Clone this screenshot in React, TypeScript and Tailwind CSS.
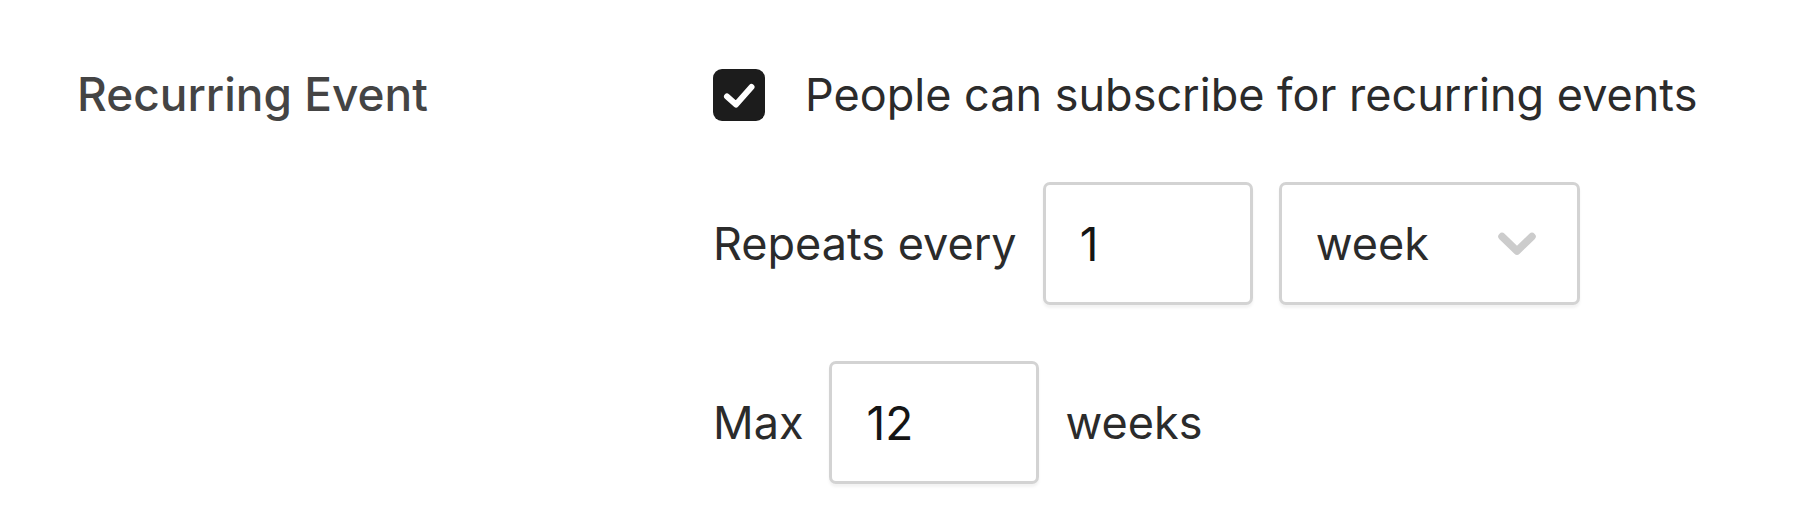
import { useState } from 'react';

function CheckBox({ checked, onToggle }: { checked: boolean; onToggle: () => void }) {
  return (
    <button
      type="button"
      onClick={onToggle}
      className={`w-[52px] h-[52px] rounded-[9px] flex items-center justify-center shrink-0 ${
        checked ? 'bg-[#1c1c1c]' : 'bg-white border-[3px] border-[#d3d3d3]'
      }`}
    >
      {checked && (
        <svg width="52" height="52" viewBox="0 0 52 52" fill="none">
          <path d="M14 27.5L23 35.5L38.5 18" stroke="white" strokeWidth="6" strokeLinecap="round" strokeLinejoin="round" />
        </svg>
      )}
    </button>
  );
}

function NumberBox({ value, onChange }: { value: string; onChange: (v: string) => void }) {
  return (
    <input
      type="text"
      value={value}
      onChange={(e) => onChange(e.target.value)}
      className="w-[210px] h-[123px] border-[3px] border-[#d3d3d3] rounded-[7px] pl-[34px] pr-4 text-[46px] text-[#151515] bg-white shadow-[0_3px_3px_rgba(0,0,0,0.05)] outline-none"
    />
  );
}

export default function App() {
  const [subscribe, setSubscribe] = useState(true);
  const [every, setEvery] = useState('1');
  const [unit, setUnit] = useState('week');
  const [max, setMax] = useState('12');

  return (
    <div className="min-h-screen bg-white font-['Inter','Noto_Sans',sans-serif] text-[45px] leading-[1.5] text-[#2b2b2b]">
      <div className="flex pt-[60px] pl-[77px]">
        <div className="w-[636px] h-[69px] flex items-center text-[46px] font-medium text-[#444444]">Recurring Event</div>

        <div className="flex flex-col">
          <label className="h-[69px] flex items-center gap-[40px] cursor-pointer">
            <CheckBox checked={subscribe} onToggle={() => setSubscribe(!subscribe)} />
            <span>People can subscribe for recurring events</span>
          </label>

          <div className="mt-[53px] flex items-center gap-[26px]">
            <span>Repeats every</span>
            <NumberBox value={every} onChange={setEvery} />
            <div className="relative">
              <select
                value={unit}
                onChange={(e) => setUnit(e.target.value)}
                className="appearance-none w-[301px] h-[123px] border-[3px] border-[#d3d3d3] rounded-[7px] pl-[34px] pr-[80px] text-[45px] text-[#2b2b2b] bg-white shadow-[0_3px_3px_rgba(0,0,0,0.05)] outline-none"
              >
                <option value="day">day</option>
                <option value="week">week</option>
                <option value="month">month</option>
              </select>
              <svg
                className="absolute right-[44px] top-1/2 -translate-y-1/2 pointer-events-none"
                width="38"
                height="24"
                viewBox="0 0 38 24"
                fill="none"
              >
                <path d="M4 4.5L19 19L34 4.5" stroke="#cccccc" strokeWidth="7.5" strokeLinecap="round" strokeLinejoin="round" />
              </svg>
            </div>
          </div>

          <div className="mt-[56px] flex items-center gap-[26px]">
            <span>Max</span>
            <NumberBox value={max} onChange={setMax} />
            <span>weeks</span>
          </div>
        </div>
      </div>
    </div>
  );
}
